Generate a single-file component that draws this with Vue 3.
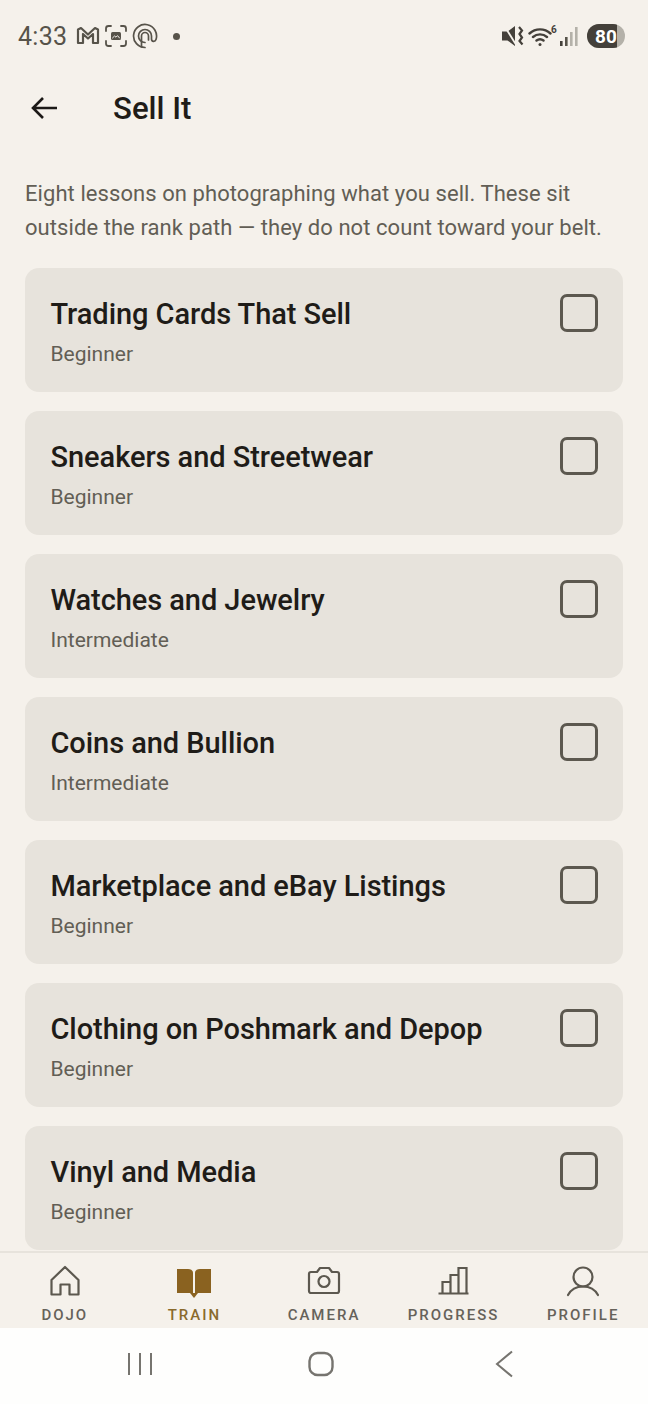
<script setup>
const lessons = [
  { title: 'Trading Cards That Sell', level: 'Beginner' },
  { title: 'Sneakers and Streetwear', level: 'Beginner' },
  { title: 'Watches and Jewelry', level: 'Intermediate' },
  { title: 'Coins and Bullion', level: 'Intermediate' },
  { title: 'Marketplace and eBay Listings', level: 'Beginner' },
  { title: 'Clothing on Poshmark and Depop', level: 'Beginner' },
  { title: 'Vinyl and Media', level: 'Beginner' }
]

const tabs = [
  { key: 'dojo', label: 'DOJO' },
  { key: 'train', label: 'TRAIN', active: true },
  { key: 'camera', label: 'CAMERA' },
  { key: 'progress', label: 'PROGRESS' },
  { key: 'profile', label: 'PROFILE' }
]
</script>

<template>
  <div class="screen">
    <div class="status">
      <div class="status__left">
        <span class="status__time">4:33</span>
        <svg class="status__icon" width="24" height="20" viewBox="0 0 24 20" fill="none" stroke="#57534a" stroke-width="2.200" stroke-linejoin="round">
          <path d="M2 17V3.500L5 2l7 6.500L19 2l3 1.500V17H17V8l-5 4.500L7 8v9z" />
        </svg>
        <svg class="status__icon" width="24" height="24" viewBox="0 0 24 24" fill="none" stroke="#57534a" stroke-width="1.800" stroke-linecap="round">
          <path d="M2 7V4.500A2.500 2.500 0 0 1 4.500 2H7M17 2h2.500A2.500 2.500 0 0 1 22 4.500V7M22 17v2.500a2.500 2.500 0 0 1-2.500 2.500H17M7 22H4.500A2.500 2.500 0 0 1 2 19.500V17" />
          <rect x="7" y="8" width="10" height="8" rx="1.500" fill="#57534a" stroke="none" />
          <path d="M8.500 14l2-2 1.500 1.200 1.500-1.600 2 2.400" stroke="#f5f1eb" stroke-width="1" />
        </svg>
        <svg class="status__icon" width="26" height="26" viewBox="0 0 26 26" fill="none" stroke="#57534a" stroke-width="1.700" stroke-linecap="round">
          <path d="M13 24.500a11.500 11.500 0 1 1 11-8c-.8 2.600-4.500 2.600-4.500-.5V13a6.500 6.500 0 1 0-6.500 6.500" />
          <path d="M9.500 24V13a3.500 3.500 0 0 1 7 0v4" />
        </svg>
        <span class="status__dot"></span>
      </div>
      <div class="status__right">
        <svg width="26" height="26" viewBox="0 0 26 26" fill="#44403a">
          <path d="M2 8.500h5.500L15 3v20l-7.500-5.500H2z" />
          <path d="M3.500 1.500l14 22.500" stroke="#f5f1eb" stroke-width="1.800" />
          <path d="M19 4l3 3.500-2.500 3.500 2.500 3.500-2.500 3.500 3 3.500" fill="none" stroke="#44403a" stroke-width="2.200" />
        </svg>
        <svg class="status__wifi" width="30" height="22" viewBox="0 0 30 22" fill="none" stroke="#44403a" stroke-width="2.400" stroke-linecap="round">
          <path d="M1.500 8.500c6-5.500 15-5.500 21 0M5 12c4-3.500 10-3.500 14 0M8.500 15.500c2-1.500 5-1.500 7 0" />
          <circle cx="12" cy="19.500" r="1.500" fill="#44403a" stroke="none" />
          <text x="23" y="8" class="status__wifi-num">6</text>
        </svg>
        <svg width="20" height="22" viewBox="0 0 20 22">
          <rect x="0" y="16" width="2.600" height="5" fill="#44403a" />
          <rect x="5" y="12" width="2.600" height="9" fill="#57534a" />
          <rect x="10" y="7" width="2.600" height="14" fill="#b4b1a9" />
          <rect x="15" y="2" width="2.600" height="19" fill="#b4b1a9" />
        </svg>
        <div class="battery"><span class="battery__fill"></span><span class="battery__num">80</span></div>
      </div>
    </div>

    <header class="topbar">
      <svg width="28" height="28" viewBox="0 0 28 28" fill="none" stroke="#1c1917" stroke-width="2.600">
        <path d="M27 14H3M13 4L3 14l10 10" />
      </svg>
      <h1>Sell It</h1>
    </header>

    <main class="content">
      <p class="intro">Eight lessons on photographing what you sell. These sit outside the rank path — they do not count toward your belt.</p>
      <div class="list">
        <article v-for="lesson in lessons" :key="lesson.title" class="card">
          <div class="card__text">
            <h2>{{ lesson.title }}</h2>
            <span>{{ lesson.level }}</span>
          </div>
          <div class="check"></div>
        </article>
      </div>
    </main>

    <nav class="tabs">
      <div v-for="tab in tabs" :key="tab.key" class="tab" :class="{ 'is-active': tab.active }">
        <svg v-if="tab.key === 'dojo'" width="32" height="34" viewBox="0 0 32 34" fill="none" stroke="currentColor" stroke-width="2.200" stroke-linejoin="round">
          <path d="M2.500 29.500V15L16 2l13.500 13v14.500H20.500V19.500h-9v10z" />
        </svg>
        <svg v-else-if="tab.key === 'train'" width="36" height="34" viewBox="0 0 36 34" fill="currentColor">
          <path d="M1 4h11c3 0 5 1.500 5 4v20H1z" />
          <path d="M19 8c0-2.500 2-4 5-4h11v24H19z" />
          <path d="M14 28h8l-4 5z" />
        </svg>
        <svg v-else-if="tab.key === 'camera'" width="34" height="34" viewBox="0 0 34 34" fill="none" stroke="currentColor" stroke-width="2.200" stroke-linejoin="round">
          <path d="M4 7h6l3-4h9l3 4h5a2 2 0 0 1 2 2v17a2 2 0 0 1-2 2H4a2 2 0 0 1-2-2V9a2 2 0 0 1 2-2z" />
          <circle cx="17" cy="16.500" r="5.500" />
        </svg>
        <svg v-else-if="tab.key === 'progress'" width="32" height="34" viewBox="0 0 32 34" fill="none" stroke="currentColor" stroke-width="2.200">
          <path d="M1 28.500h30M5 28V17h8v11M13 28V10h8v18M21 28V3h8v25" transform="translate(-.5 0)" />
        </svg>
        <svg v-else width="34" height="34" viewBox="0 0 34 34" fill="none" stroke="currentColor" stroke-width="2.200" stroke-linecap="round">
          <circle cx="17" cy="12" r="9.500" />
          <path d="M2 30c3-5.500 8.500-8.500 15-8.500S29 24.500 32 30" />
        </svg>
        <span>{{ tab.label }}</span>
      </div>
    </nav>

    <div class="sysnav">
      <svg width="26" height="24" viewBox="0 0 26 24" stroke="#76746f" stroke-width="2">
        <path d="M2 1v22M13 1v22M24 1v22" />
      </svg>
      <svg width="26" height="26" viewBox="0 0 26 26" fill="none" stroke="#76746f" stroke-width="2.400">
        <rect x="1.500" y="2" width="23" height="22" rx="8" />
      </svg>
      <svg class="sysnav__back" width="20" height="28" viewBox="0 0 20 28" fill="none" stroke="#76746f" stroke-width="2">
        <path d="M17 1.500L2 14l15 12.500" />
      </svg>
    </div>
  </div>
</template>

<style>
html,
body {
  margin: 0;
  background: #f5f1eb;
}
</style>

<style scoped>
.screen {
  width: 648px;
  height: 1404px;
  display: flex;
  flex-direction: column;
  overflow: hidden;
  background: #f5f1eb;
  color: #1f1c18;
  font-family: Roboto, "Liberation Sans", sans-serif;
}

.status {
  flex: 0 0 72px;
  box-sizing: border-box;
  display: flex;
  align-items: center;
  justify-content: space-between;
  padding: 0 23px 0 18px;
}

.status__left,
.status__right {
  display: flex;
  align-items: center;
}

.status__time {
  font-size: 25px;
  color: #57534a;
  margin-right: 9px;
  letter-spacing: .3px;
}

.status__icon {
  margin-right: 4px;
}

.status__dot {
  width: 7px;
  height: 7px;
  margin-left: 11px;
  border-radius: 50%;
  background: #57534a;
}

.status__right {
  gap: 2px;
}

.status__wifi-num {
  font-size: 10px;
  font-weight: 700;
  fill: #44403a;
  stroke: none;
}

.battery {
  position: relative;
  width: 38px;
  height: 24px;
  margin-left: 5px;
  overflow: hidden;
  border-radius: 12px;
  background: #b4b1a9;
}

.battery__fill {
  position: absolute;
  inset: 0 8px 0 0;
  background: #44403a;
}

.battery__num {
  position: absolute;
  inset: 0;
  display: flex;
  align-items: center;
  justify-content: center;
  color: #fff;
  font-size: 19px;
  font-weight: 700;
}

.topbar {
  flex: 0 0 72px;
  display: flex;
  align-items: center;
  gap: 55px;
  padding-left: 30px;
}

.topbar h1 {
  margin: 0;
  font-size: 31.2px;
  font-weight: 500;
}

.content {
  flex: 1 1 auto;
  min-height: 0;
  overflow: hidden;
  padding: 33px 25px 0;
}

.intro {
  margin: 0 0 23px;
  font-size: 22px;
  line-height: 34px;
  letter-spacing: .07px;
  color: #625e55;
}

.list {
  display: flex;
  flex-direction: column;
  gap: 19px;
}

.card {
  flex: 0 0 124px;
  box-sizing: border-box;
  display: flex;
  justify-content: space-between;
  padding: 26px 25px 0 25.5px;
  border-radius: 14px;
  background: #e7e3dc;
}

.card__text h2 {
  margin: 1px 0 9px;
  font-size: 29px;
  line-height: 38px;
  font-weight: 500;
  letter-spacing: -.06px;
}

.card__text span {
  font-size: 21px;
  color: #625e55;
}

.check {
  width: 38px;
  height: 38px;
  box-sizing: border-box;
  border: 3px solid #5c584f;
  border-radius: 7px;
}

.tabs {
  flex: 0 0 77px;
  box-sizing: border-box;
  display: grid;
  grid-template-columns: repeat(5, 1fr);
  border-top: 2px solid #e7e3dc;
  background: #f5f1eb;
}

.tab {
  display: flex;
  flex-direction: column;
  align-items: center;
  padding-top: 12px;
  color: #5c584f;
}

.tab span {
  margin-top: 6px;
  font-size: 15px;
  line-height: 20px;
  font-weight: 500;
  letter-spacing: 2px;
  color: #66625a;
}

.tab.is-active {
  color: #8a6220;
}

.tab.is-active span {
  color: #8a6a2c;
}

.sysnav {
  flex: 0 0 76px;
  box-sizing: border-box;
  display: flex;
  align-items: center;
  gap: 155px;
  padding: 0 0 4px 127px;
  background: #fefefd;
}

.sysnav__back {
  margin-left: 6px;
}
</style>
